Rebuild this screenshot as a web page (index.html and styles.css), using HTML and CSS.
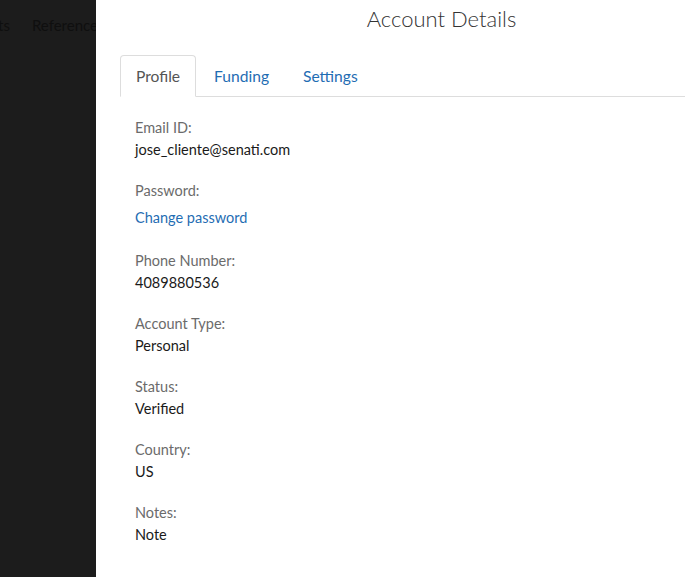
FILE: index.html
```html
<!DOCTYPE html>
<html>
<head>
<meta charset="utf-8">
<link rel="stylesheet" href="styles.css">
</head>
<body>
<div class="layout">
  <div class="backdrop">
    <span class="bd-item bd-first">ts</span>
    <span class="bd-item">Reference</span>
  </div>
  <div class="panel">
    <div class="header"><h1 class="title">Account Details</h1></div>
    <ul class="tabs">
      <li class="tab active">Profile</li>
      <li class="tab">Funding</li>
      <li class="tab">Settings</li>
    </ul>
    <div class="content">
      <div class="field"><div class="label">Email ID:</div><div class="value">jose_cliente@senati.com</div></div>
      <div class="field"><div class="label">Password:</div><a class="link">Change password</a></div>
      <div class="field"><div class="label">Phone Number:</div><div class="value">4089880536</div></div>
      <div class="field"><div class="label">Account Type:</div><div class="value">Personal</div></div>
      <div class="field"><div class="label">Status:</div><div class="value">Verified</div></div>
      <div class="field"><div class="label">Country:</div><div class="value">US</div></div>
      <div class="field"><div class="label">Notes:</div><div class="value">Note</div></div>
    </div>
  </div>
</div>
</body>
</html>
```
FILE: styles.css
```css
html, body {
  margin: 0;
  padding: 0;
  height: 100%;
  overflow: hidden;
  font-family: Lato, "Open Sans", sans-serif;
}
.layout {
  display: flex;
  height: 577px;
}
.backdrop {
  width: 96px;
  flex: none;
  background: #1c1c1c;
  display: flex;
  gap: 22px;
  padding-top: 15px;
  box-sizing: border-box;
  overflow: hidden;
  white-space: nowrap;
}
.bd-item {
  color: #0f0f0f;
  font-size: 15px;
  line-height: 20px;
}
.bd-first {
  margin-left: -2px;
}
.panel {
  flex: 1;
  background: #fff;
  box-sizing: border-box;
  padding-left: 24px;
  min-width: 0;
}
.header {
  padding-left: 78px;
  text-align: center;
}
.title {
  margin: 0;
  padding-top: 4px;
  font-size: 22px;
  font-weight: 300;
  line-height: 30px;
  color: #333;
}
.tabs {
  list-style: none;
  margin: 21px 0 0;
  padding: 0;
  display: flex;
  gap: 2px;
  border-bottom: 1px solid #ddd;
}
.tab {
  padding: 10px 15px;
  font-size: 15.6px;
  line-height: 20px;
  color: #1f6db3;
  border: 1px solid transparent;
  border-radius: 4px 4px 0 0;
  margin-bottom: -1px;
}
.tab.active {
  color: #555;
  border-color: #ddd;
  border-bottom-color: #fff;
  background: #fff;
}
.content {
  padding: 20px 15px 0;
}
.field {
  margin-bottom: 19px;
  font-size: 14.5px;
  line-height: 22px;
}
.label {
  color: #6b6b6b;
}
.value {
  color: #1a1a1a;
}
.link {
  display: block;
  color: #1f6db3;
  padding: 5px 0 2px;
  text-decoration: none;
}
```
